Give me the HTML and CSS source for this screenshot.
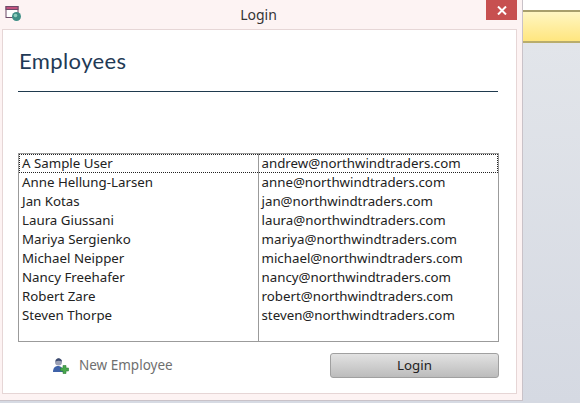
FILE: index.html
```html
<!DOCTYPE html>
<html lang="en">
<head>
<meta charset="utf-8">
<title>Login</title>
<link rel="stylesheet" href="styles.css">
</head>
<body>
<div class="window">
  <header class="titlebar">
    <svg class="app-icon" width="16" height="16" viewBox="0 0 16 16">
      <rect x="1" y="0.5" width="12" height="11" fill="#fff" stroke="#6d4a68"/>
      <rect x="1" y="0.5" width="12" height="3" fill="#c2527e" stroke="#6d4a68"/>
      <circle cx="11.5" cy="10.5" r="4.5" fill="#3f8f86"/>
      <circle cx="10.5" cy="9.5" r="1.8" fill="#8fcdbd"/>
    </svg>
    <span class="title">Login</span>
    <button class="close" type="button" aria-label="Close">
      <svg width="10" height="9" viewBox="0 0 10 9"><path d="M1 .5 9 8.500M9 .5 1 8.500" stroke="#fff" stroke-width="2"/></svg>
    </button>
  </header>
  <main class="panel">
    <h1 class="heading">Employees</h1>
    <div class="list">
      <div class="row selected"><span class="name">A Sample User</span><span class="email">andrew@northwindtraders.com</span></div>
      <div class="row"><span class="name">Anne Hellung-Larsen</span><span class="email">anne@northwindtraders.com</span></div>
      <div class="row"><span class="name">Jan Kotas</span><span class="email">jan@northwindtraders.com</span></div>
      <div class="row"><span class="name">Laura Giussani</span><span class="email">laura@northwindtraders.com</span></div>
      <div class="row"><span class="name">Mariya Sergienko</span><span class="email">mariya@northwindtraders.com</span></div>
      <div class="row"><span class="name">Michael Neipper</span><span class="email">michael@northwindtraders.com</span></div>
      <div class="row"><span class="name">Nancy Freehafer</span><span class="email">nancy@northwindtraders.com</span></div>
      <div class="row"><span class="name">Robert Zare</span><span class="email">robert@northwindtraders.com</span></div>
      <div class="row"><span class="name">Steven Thorpe</span><span class="email">steven@northwindtraders.com</span></div>
    </div>
    <div class="actions">
      <a class="new-employee">
        <svg width="17" height="17" viewBox="0 0 17 17">
          <path d="M1 15c0-4 2-6 5-6s5 2 5 6z" fill="#3f62a8"/>
          <circle cx="6.500" cy="5" r="3.500" fill="#9a9fb4"/>
          <path d="M3.500 4.500C4 2 5.500 1 7 1.300S10 3 9.800 4.500C8 3.500 5.500 3.500 3.500 4.500z" fill="#3c4a6e"/>
          <path d="M11 8.500h3v2.500h2.500v3H14v2.500h-3V14H8.500v-3H11z" fill="#48a84c" stroke="#2f7d3a" stroke-width=".6"/>
        </svg>
        <span class="new-label">New Employee</span>
      </a>
      <button class="login" type="button">Login</button>
    </div>
  </main>
</div>
<aside class="backdrop">
  <div class="strip"></div>
</aside>
</body>
</html>
```
FILE: styles.css
```css
* { box-sizing: border-box; }
html, body { margin: 0; height: 100%; overflow: hidden; }
body {
  display: flex;
  height: 403px;
  background: #d6dae3;
  font-family: "Noto Sans", "Open Sans", sans-serif;
  font-size: 13.300px;
  color: #222;
}
.window {
  width: 523px;
  height: 401px;
  flex: none;
  background: #fdf3f3;
  border-right: 1px solid #c9c2c8;
  border-bottom: 1px solid #c9c2c8;
  padding-right: 5px;
  padding-left: 2px;
  display: flex;
  flex-direction: column;
}
.titlebar {
  height: 29px;
  flex: none;
  display: flex;
  align-items: flex-start;
  position: relative;
}
.app-icon { margin: 6px 0 0 3px; }
.title {
  position: absolute;
  left: 0;
  right: 2px;
  top: 5px;
  text-align: center;
  font-size: 14px;
  line-height: 20px;
  color: #333;
}
.close {
  position: absolute;
  right: 0;
  top: 0;
  width: 31px;
  height: 20px;
  padding: 0;
  border: 0;
  background: #c75050;
  display: flex;
  align-items: center;
  justify-content: center;
}
.panel {
  height: 365px;
  background: #fff;
  border: 1px solid #e6d6d6;
  padding: 0 17px 0 15px;
  display: flex;
  flex-direction: column;
}
.heading {
  margin: 0 1px 0 0;
  height: 62px;
  padding: 17px 0 0 1px;
  font-family: Lato, sans-serif;
  font-weight: 400;
  font-size: 22px;
  line-height: 27px;
  letter-spacing: .4px;
  color: #1f3a56;
  border-bottom: 1px solid #1f3a4e;
}
.list {
  margin-top: 61px;
  height: 189px;
  border: 1px solid #9b9b9b;
  background: linear-gradient(#9b9b9b, #9b9b9b) 239px 0 / 1px 100% no-repeat #fff;
}
.row {
  height: 19px;
  display: grid;
  grid-template-columns: 240px 1fr;
  line-height: 19px;
}
.row.selected {
  outline: 1px dotted #222;
  outline-offset: -1px;
}
.name { padding-left: 3px; white-space: nowrap; }
.email { padding-left: 2.500px; white-space: nowrap; }
.actions {
  display: flex;
  justify-content: space-between;
  align-items: center;
  padding: 11px 0 0 34px;
}
.new-employee {
  display: flex;
  align-items: center;
  gap: 10px;
  font-size: 13.500px;
  color: #6f6f6f;
}
.new-label { margin-bottom: 2px; }
.login {
  width: 169px;
  height: 25px;
  padding: 0 0 2px;
  border: 1px solid #a0a0a0;
  border-radius: 3px;
  background: linear-gradient(#e2e2e2, #bcbcbc);
  font: inherit;
  color: #222;
}
.backdrop {
  flex: 1;
  padding-top: 10px;
  background: linear-gradient(#fff 10px, #e2e5ea 42px, #d5d9e2);
}
.strip {
  height: 33px;
  border-top: 2px solid #a89f6c;
  border-bottom: 2px solid #b9ad6c;
  background: linear-gradient(#fff6c2, #ffe67f);
}
```
